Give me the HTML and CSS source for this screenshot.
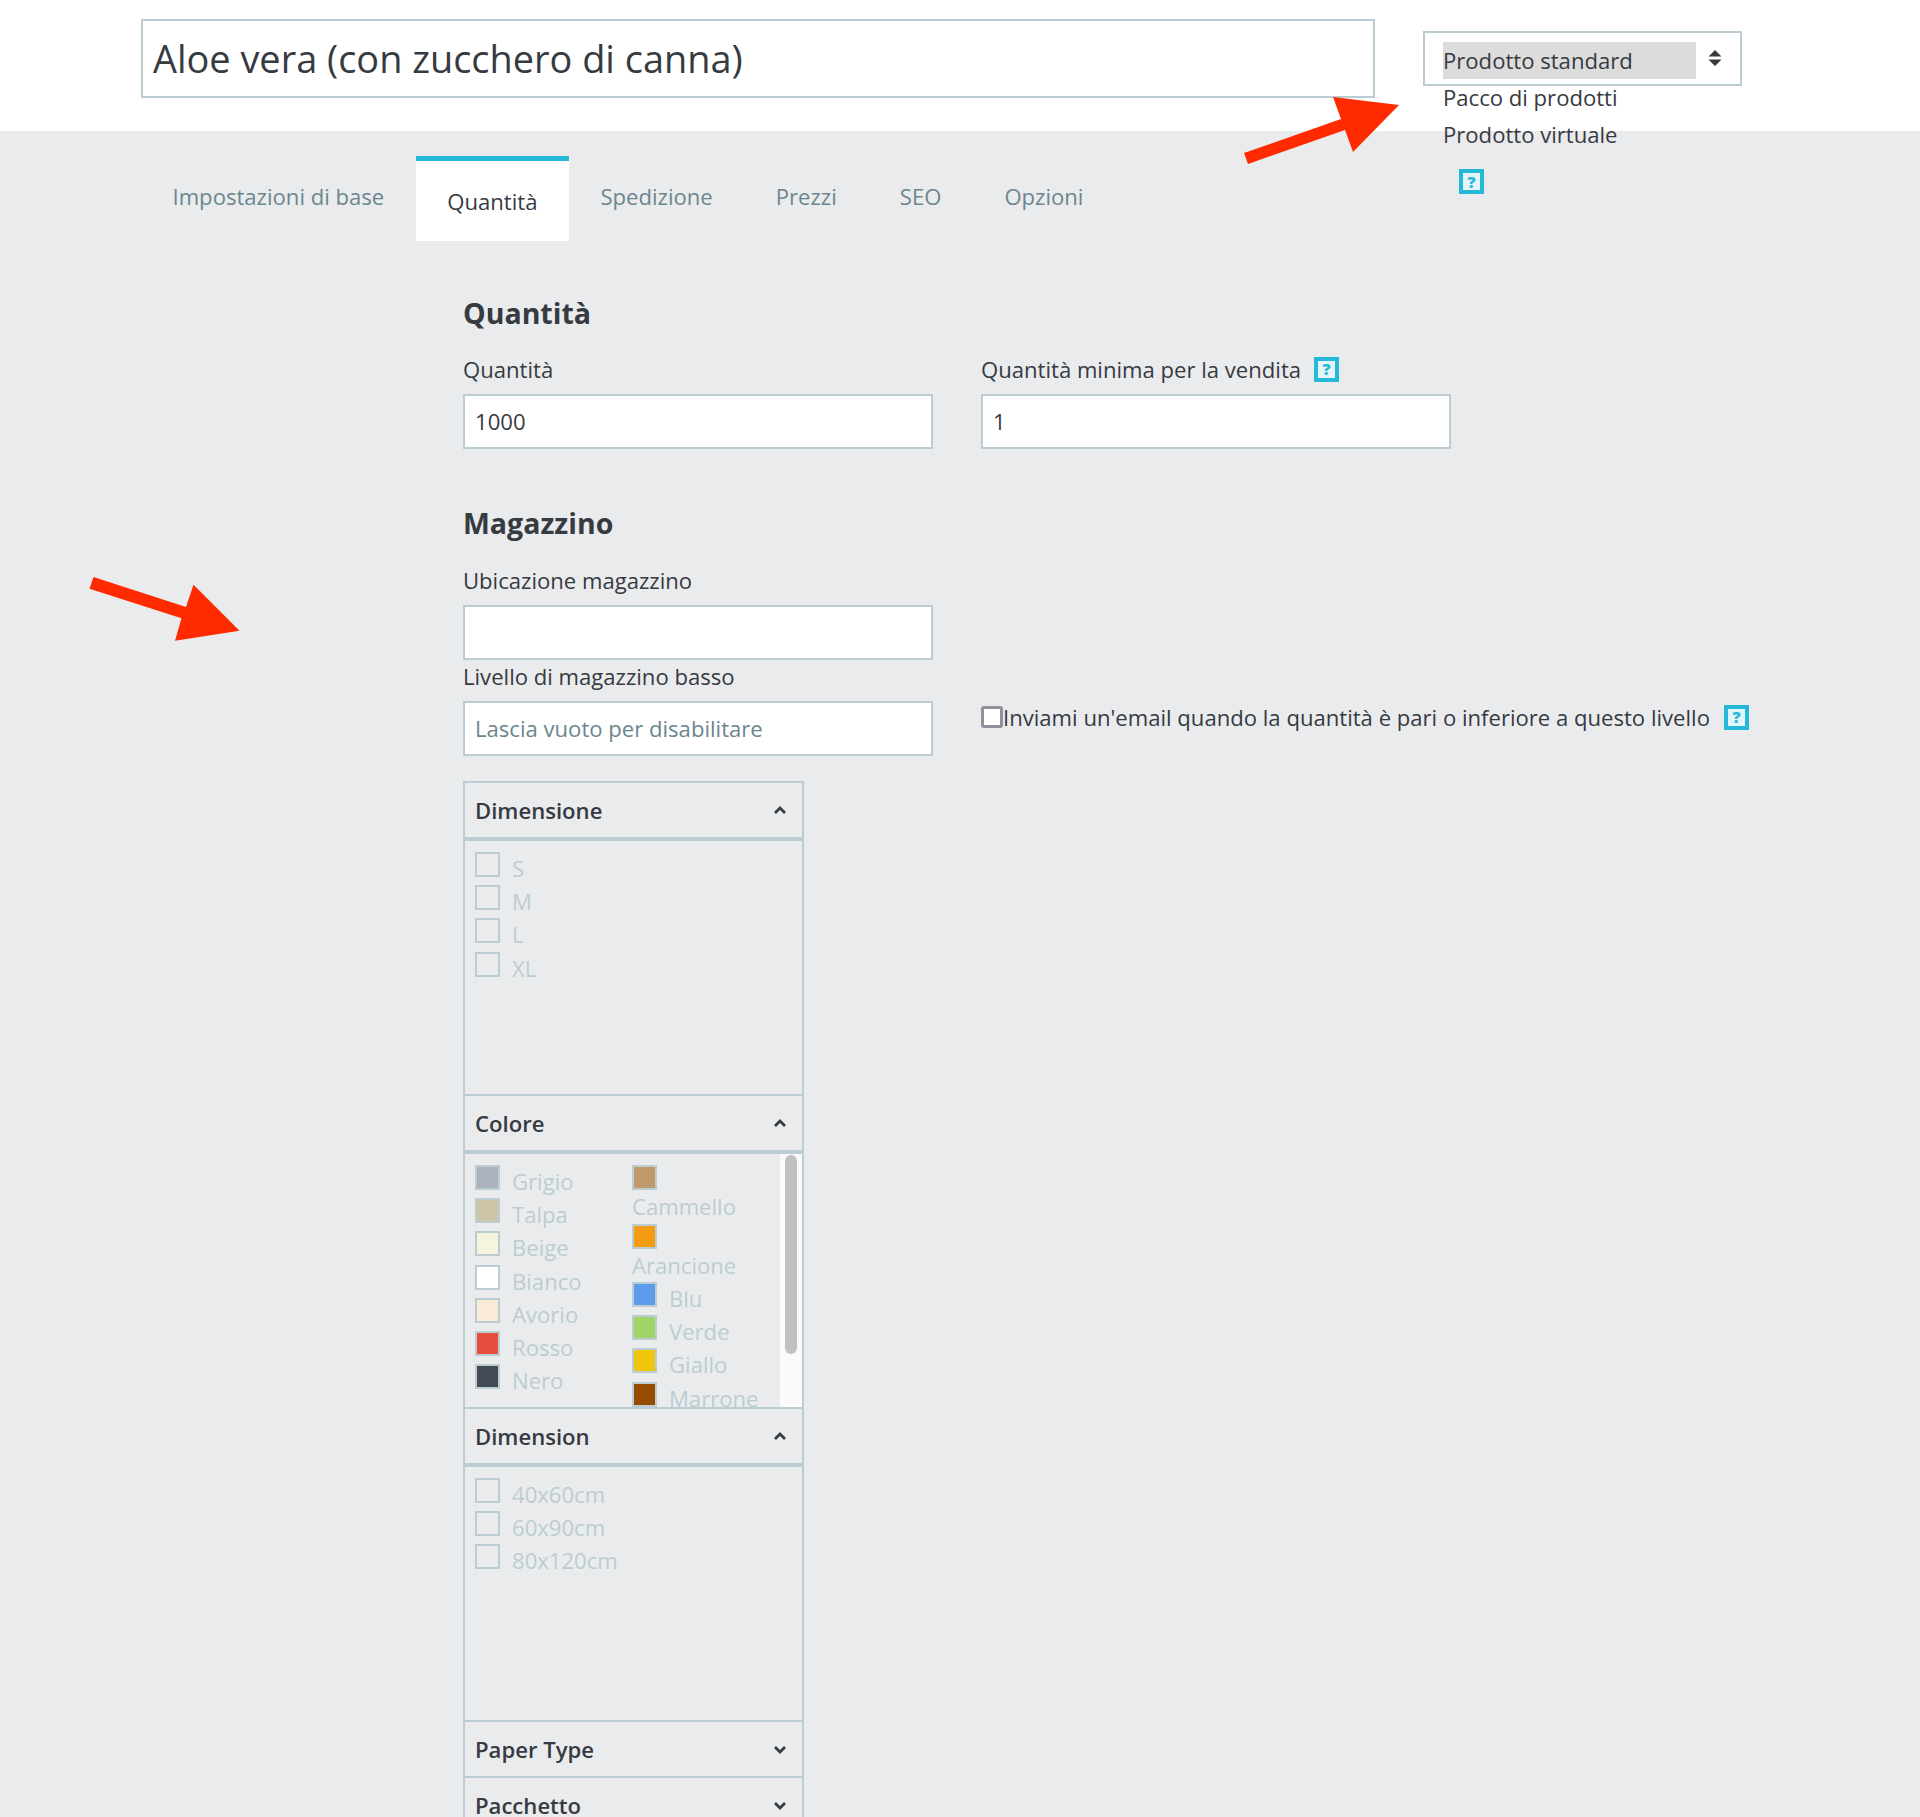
FILE: index.html
```html
<!DOCTYPE html>
<html lang="it">
<head>
    <meta charset="UTF-8">
    <title>Aloe vera (con zucchero di canna)</title>
    <link rel="stylesheet" href="styles.css">
</head>
<body>
    <div class="page">
        <header class="product-header">
            <input class="title-input" type="text" value="Aloe vera (con zucchero di canna)">
            <div class="type-select">
                <div class="type-box">
                    <div class="type-option type-selected">Prodotto standard</div>
                    <svg class="sort-icon" width="14" height="16" viewBox="0 0 14 16"><path d="M7 0l6.500 6.500H.5zM7 16L.5 9.500h13z"/></svg>
                </div>
                <div class="type-option">Pacco di prodotti</div>
                <div class="type-option">Prodotto virtuale</div>
                <span class="help help-type">?</span>
            </div>
        </header>

        <nav class="tabs">
            <a class="tab">Impostazioni di base</a>
            <a class="tab tab-active">Quantità</a>
            <a class="tab">Spedizione</a>
            <a class="tab">Prezzi</a>
            <a class="tab">SEO</a>
            <a class="tab">Opzioni</a>
        </nav>

        <main class="content">
            <h2 class="section-title">Quantità</h2>
            <div class="form-row">
                <div class="field">
                    <label class="field-label">Quantità</label>
                    <input class="text-input" type="text" value="1000">
                </div>
                <div class="field">
                    <label class="field-label">Quantità minima per la vendita <span class="help">?</span></label>
                    <input class="text-input" type="text" value="1">
                </div>
            </div>

            <h2 class="section-title section-stock">Magazzino</h2>
            <div class="field">
                <label class="field-label">Ubicazione magazzino</label>
                <input class="text-input" type="text">
            </div>
            <div class="form-row low-stock">
                <div class="field">
                    <label class="field-label">Livello di magazzino basso</label>
                    <input class="text-input" type="text" placeholder="Lascia vuoto per disabilitare">
                </div>
                <div class="notify">
                    <input class="notify-check" type="checkbox">
                    <span>Inviami un'email quando la quantità è pari o inferiore a questo livello</span>
                    <span class="help">?</span>
                </div>
            </div>

            <div class="attributes">
                <section class="attr-group">
                    <div class="attr-head attr-head-open">
                        Dimensione
                        <svg class="chevron" width="14" height="9" viewBox="0 0 14 9"><path d="M2 7l5-5 5 5"/></svg>
                    </div>
                    <div class="attr-body">
                        <div class="attr-item"><span class="swatch"></span><span>S</span></div>
                        <div class="attr-item"><span class="swatch"></span><span>M</span></div>
                        <div class="attr-item"><span class="swatch"></span><span>L</span></div>
                        <div class="attr-item"><span class="swatch"></span><span>XL</span></div>
                    </div>
                </section>

                <section class="attr-group">
                    <div class="attr-head attr-head-open">
                        Colore
                        <svg class="chevron" width="14" height="9" viewBox="0 0 14 9"><path d="M2 7l5-5 5 5"/></svg>
                    </div>
                    <div class="attr-body color-body">
                        <div class="color-col">
                            <div class="attr-item"><span class="swatch c-grigio"></span><span>Grigio</span></div>
                            <div class="attr-item"><span class="swatch c-talpa"></span><span>Talpa</span></div>
                            <div class="attr-item"><span class="swatch c-beige"></span><span>Beige</span></div>
                            <div class="attr-item"><span class="swatch c-bianco"></span><span>Bianco</span></div>
                            <div class="attr-item"><span class="swatch c-avorio"></span><span>Avorio</span></div>
                            <div class="attr-item"><span class="swatch c-rosso"></span><span>Rosso</span></div>
                            <div class="attr-item"><span class="swatch c-nero"></span><span>Nero</span></div>
                        </div>
                        <div class="color-col">
                            <div class="attr-item-wrap"><span class="swatch c-cammello"></span><span class="wrap-label">Cammello</span></div>
                            <div class="attr-item-wrap"><span class="swatch c-arancione"></span><span class="wrap-label">Arancione</span></div>
                            <div class="attr-item"><span class="swatch c-blu"></span><span>Blu</span></div>
                            <div class="attr-item"><span class="swatch c-verde"></span><span>Verde</span></div>
                            <div class="attr-item"><span class="swatch c-giallo"></span><span>Giallo</span></div>
                            <div class="attr-item"><span class="swatch c-marrone"></span><span>Marrone</span></div>
                        </div>
                        <div class="scroll-track"><div class="scroll-thumb"></div></div>
                    </div>
                </section>

                <section class="attr-group">
                    <div class="attr-head attr-head-open">
                        Dimension
                        <svg class="chevron" width="14" height="9" viewBox="0 0 14 9"><path d="M2 7l5-5 5 5"/></svg>
                    </div>
                    <div class="attr-body">
                        <div class="attr-item"><span class="swatch"></span><span>40x60cm</span></div>
                        <div class="attr-item"><span class="swatch"></span><span>60x90cm</span></div>
                        <div class="attr-item"><span class="swatch"></span><span>80x120cm</span></div>
                    </div>
                </section>

                <section class="attr-group">
                    <div class="attr-head">
                        Paper Type
                        <svg class="chevron" width="14" height="9" viewBox="0 0 14 9"><path d="M2 2l5 5 5-5"/></svg>
                    </div>
                </section>

                <section class="attr-group">
                    <div class="attr-head">
                        Pacchetto
                        <svg class="chevron" width="14" height="9" viewBox="0 0 14 9"><path d="M2 2l5 5 5-5"/></svg>
                    </div>
                </section>
            </div>
        </main>

        <!-- red annotation arrows drawn over the screenshot -->
        <svg class="annotation" width="1920" height="700" viewBox="0 0 1920 700">
            <path d="M1244 153l4 11 97-34 8 22 46-47-66-8 8 22z"/>
            <path d="M93.500 577l-4 11.700 92 29.600-6.500 22.400 64.500-10-46-46-7.500 22.300z"/>
        </svg>
    </div>
</body>
</html>
```

FILE: styles.css
```css
* {
    margin: 0;
    padding: 0;
    box-sizing: border-box;
}

body {
    font-family: "Open Sans", sans-serif;
    font-size: 22.1px;
    color: #363a41;
    background-color: #eaebed;
    height: 1817px;
    overflow: hidden;
}

.page {
    position: relative;
}

.product-header {
    display: flex;
    align-items: flex-start;
    gap: 48px;
    height: 131px;
    padding-left: 141px;
    background: white;
}

.title-input {
    width: 1234px;
    height: 79px;
    margin-top: 19px;
    padding: 0 10px 2px;
    border: 2px solid #bbcdd2;
    font-family: inherit;
    font-size: 37.900px;
    color: #363a41;
    background: white;
    outline: none;
}

.type-select {
    width: 319px;
    margin-top: 31px;
}

.type-box {
    display: flex;
    align-items: center;
    height: 55px;
    margin-bottom: -7px;
    padding-left: 18px;
    border: 2px solid #bbcdd2;
    background: white;
}

.type-box .type-option {
    margin: 4px 0 0;
}

.type-option {
    height: 37px;
    line-height: 37px;
    margin-left: 20px;
}

.type-selected {
    flex: none;
    width: 253px;
    background: #dcdcdc;
}

.sort-icon {
    margin: -1px 0 0 12px;
    fill: #363a41;
}

.help {
    display: inline-flex;
    align-items: center;
    justify-content: center;
    width: 25px;
    height: 25px;
    border: 4px solid #25b9d7;
    background: #e3f5f9;
    color: #25b9d7;
    font-size: 16px;
    font-weight: 800;
    line-height: 1;
}

.help-type {
    margin: 16px 0 0 36px;
}

.tabs {
    display: flex;
    align-items: flex-start;
    margin-top: 25px;
    padding-left: 141px;
}

.tab {
    display: flex;
    align-items: center;
    height: 80px;
    padding: 0 31.500px;
    color: #6c868e;
}

.tab-active {
    height: 85px;
    border-top: 5px solid #25b9d7;
    background: white;
    color: #363a41;
}

.content {
    padding-left: 463px;
}

.section-title {
    margin-top: 54px;
    font-size: 28.500px;
    font-weight: 700;
    line-height: 37px;
}

.section-stock {
    margin-top: 56px;
}

.form-row {
    display: grid;
    grid-template-columns: 470px 470px;
    gap: 48px;
}

.field-label {
    display: flex;
    align-items: center;
    gap: 13px;
    height: 30px;
    margin: 22px 0 10px;
    white-space: nowrap;
}

.section-stock + .field .field-label {
    margin-top: 23px;
}

.low-stock .field-label {
    margin-top: 1px;
}

.text-input {
    display: block;
    width: 470px;
    height: 55px;
    padding: 0 10px 2px;
    border: 2px solid #bbcdd2;
    background: white;
    font-family: inherit;
    font-size: 22.1px;
    color: #363a41;
    outline: none;
}

.text-input::placeholder {
    color: #6c868e;
    opacity: 1;
}

.notify {
    display: flex;
    align-items: center;
    align-self: end;
    height: 30px;
    margin-bottom: 24px;
    white-space: nowrap;
}

.notify-check {
    appearance: none;
    flex: none;
    width: 22px;
    height: 22px;
    border: 3px solid #8f8f9d;
    border-radius: 3px;
    background: white;
}

.notify .help {
    flex: none;
    margin-left: 14px;
}

.attributes {
    width: 341px;
    margin-top: 25px;
    border: solid #bbcdd2;
    border-width: 0 2px;
}

.attr-group {
    border-top: 2px solid #bbcdd2;
}

.attr-head {
    display: flex;
    align-items: center;
    justify-content: space-between;
    height: 54px;
    padding: 0 15px 0 10px;
    font-weight: 600;
}

.attr-head-open {
    height: 58px;
    border-bottom: 4px solid #bbcdd2;
}

.chevron {
    fill: none;
    stroke: #363a41;
    stroke-width: 2.800;
}

.attr-body {
    height: 253px;
    padding: 11px 0 0 10px;
    color: #bbcdd2;
    overflow: hidden;
}

.attr-item {
    display: flex;
    gap: 12px;
    height: 33.200px;
    line-height: 30px;
}

.attr-item span:last-child {
    padding-top: 1px;
}

.swatch {
    flex: none;
    width: 25px;
    height: 25px;
    border: 2px solid #bbcdd2;
}

.color-body {
    display: flex;
    position: relative;
}

.color-col {
    flex: none;
    width: 157px;
}

.attr-item-wrap {
    height: 58.500px;
}

.attr-item-wrap .swatch {
    display: block;
}

.wrap-label {
    display: block;
    line-height: 33px;
}

.c-grigio { background: #aab2bd; }
.c-talpa { background: #ccc5a8; }
.c-beige { background: #f5f5dc; }
.c-bianco { background: #ffffff; }
.c-avorio { background: #faebd7; }
.c-rosso { background: #e84c3d; }
.c-nero { background: #434a54; }
.c-cammello { background: #c19a6b; }
.c-arancione { background: #f39c11; }
.c-blu { background: #5d9cec; }
.c-verde { background: #a0d468; }
.c-giallo { background: #f1c40f; }
.c-marrone { background: #964b00; }

.scroll-track {
    position: absolute;
    top: 0;
    right: 0;
    bottom: 0;
    width: 22px;
    padding: 1px 5px 0;
    background: #fafafa;
}

.scroll-thumb {
    height: 199px;
    border-radius: 6px;
    background: #c1c1c1;
}

.annotation {
    position: absolute;
    top: 0;
    left: 0;
    fill: #ff2a00;
    pointer-events: none;
}
```
